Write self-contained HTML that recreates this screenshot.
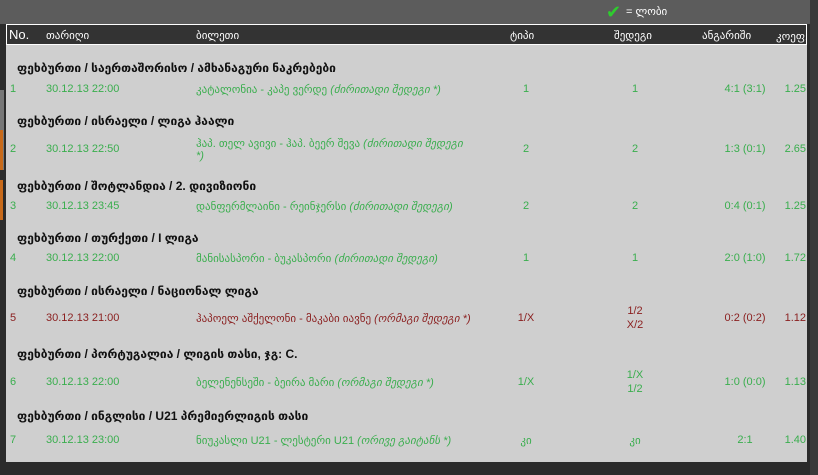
<!DOCTYPE html><html><head><meta charset="utf-8"><style>
body{margin:0;width:818px;height:475px;overflow:hidden;background:#2b2b2b;font-family:"Liberation Sans","DejaVu Sans",sans-serif;position:relative}
.top{position:absolute;left:0;top:0;width:810px;height:24px;background:#5c5c5c}
.hdr{position:absolute;left:6px;top:24px;width:799px;height:19px;background:#333;border:1px solid #fff;color:#fff;font-size:11px}
.body{position:absolute;left:6px;top:45px;width:801px;height:417px;background:#cfcfcf}
.t{position:absolute;white-space:nowrap}
.g{font-weight:bold;font-size:12px;color:#111;left:17px}
.r{font-size:11px;color:#3aae4e}
.d{color:#8a1e1e}
i{font-style:italic}
.c{text-align:center;width:60px}
.k{right:12px}
</style></head><body>
<div class="top"></div>
<div class="t" style="left:606px;top:2px;color:#2ecc2e;font-size:18px;font-weight:bold">✔</div>
<div class="t" style="left:626px;top:5px;color:#fff;font-size:11px">= ლობი</div>
<div style="position:absolute;left:0;top:90px;width:4px;height:80px;background:#777"></div>
<div style="position:absolute;left:0;top:130px;width:3px;height:40px;background:#c86a1a"></div>
<div style="position:absolute;left:0;top:180px;width:3px;height:40px;background:#c86a1a"></div>
<div style="position:absolute;left:810px;top:0;width:8px;height:475px;background:#3a3a3a"></div>
<div class="hdr">
<span class="t" style="left:2px;top:2px;font-size:13px">No.</span>
<span class="t" style="left:39px;top:4px">თარიღი</span>
<span class="t" style="left:189px;top:4px">ბილეთი</span>
<span class="t" style="left:503px;top:4px">ტიპი</span>
<span class="t" style="left:607px;top:4px">შედეგი</span>
<span class="t" style="left:695px;top:4px">ანგარიში</span>
<span class="t" style="left:769px;top:5px">კოეფ.</span>
</div>
<div class="body"></div>
<div class="t g" style="top:61px">ფეხბურთი / საერთაშორისო / ამხანაგური ნაკრებები</div>
<div class="t g" style="top:114px">ფეხბურთი / ისრაელი / ლიგა ჰაალი</div>
<div class="t g" style="top:179px">ფეხბურთი / შოტლანდია / 2. დივიზიონი</div>
<div class="t g" style="top:231px">ფეხბურთი / თურქეთი / I ლიგა</div>
<div class="t g" style="top:284px">ფეხბურთი / ისრაელი / ნაციონალ ლიგა</div>
<div class="t g" style="top:347px">ფეხბურთი / პორტუგალია / ლიგის თასი, ჯგ: C.</div>
<div class="t g" style="top:409px">ფეხბურთი / ინგლისი / U21 პრემიერლიგის თასი</div>

<div class="t r" style="left:10px;top:83px">1</div><div class="t r" style="left:46px;top:83px">30.12.13 22:00</div><div class="t r" style="left:196px;top:83px">კატალონია - კაპე ვერდე <i>(ძირითადი შედეგი *)</i></div><div class="t r c" style="left:496px;top:83px">1</div><div class="t r c" style="left:605px;top:83px">1</div><div class="t r c" style="left:715px;top:83px">4:1 (3:1)</div><div class="t r k" style="top:83px">1.25</div>

<div class="t r" style="left:10px;top:143px">2</div><div class="t r" style="left:46px;top:143px">30.12.13 22:50</div><div class="t r" style="left:196px;top:137px">ჰაპ. თელ ავივი - ჰაპ. ბეერ შევა <i>(ძირითადი შედეგი</i></div><div class="t r" style="left:196px;top:150px"><i>*)</i></div><div class="t r c" style="left:496px;top:143px">2</div><div class="t r c" style="left:605px;top:143px">2</div><div class="t r c" style="left:715px;top:143px">1:3 (0:1)</div><div class="t r k" style="top:143px">2.65</div>

<div class="t r" style="left:10px;top:200px">3</div><div class="t r" style="left:46px;top:200px">30.12.13 23:45</div><div class="t r" style="left:196px;top:200px">დანფერმლაინი - რეინჯერსი <i>(ძირითადი შედეგი)</i></div><div class="t r c" style="left:496px;top:200px">2</div><div class="t r c" style="left:605px;top:200px">2</div><div class="t r c" style="left:715px;top:200px">0:4 (0:1)</div><div class="t r k" style="top:200px">1.25</div>

<div class="t r" style="left:10px;top:252px">4</div><div class="t r" style="left:46px;top:252px">30.12.13 22:00</div><div class="t r" style="left:196px;top:252px">მანისასპორი - ბუკასპორი <i>(ძირითადი შედეგი)</i></div><div class="t r c" style="left:496px;top:252px">1</div><div class="t r c" style="left:605px;top:252px">1</div><div class="t r c" style="left:715px;top:252px">2:0 (1:0)</div><div class="t r k" style="top:252px">1.72</div>

<div class="t r d" style="left:10px;top:312px">5</div><div class="t r d" style="left:46px;top:312px">30.12.13 21:00</div><div class="t r d" style="left:196px;top:312px">ჰაპოელ აშქელონი - მაკაბი იავნე <i>(ორმაგი შედეგი *)</i></div><div class="t r d c" style="left:496px;top:312px">1/X</div><div class="t r d c" style="left:605px;top:305px">1/2</div><div class="t r d c" style="left:605px;top:319px">X/2</div><div class="t r d c" style="left:715px;top:312px">0:2 (0:2)</div><div class="t r d k" style="top:312px">1.12</div>

<div class="t r" style="left:10px;top:376px">6</div><div class="t r" style="left:46px;top:376px">30.12.13 22:00</div><div class="t r" style="left:196px;top:376px">ბელენენსეში - ბეირა მარი <i>(ორმაგი შედეგი *)</i></div><div class="t r c" style="left:496px;top:376px">1/X</div><div class="t r c" style="left:605px;top:369px">1/X</div><div class="t r c" style="left:605px;top:383px">1/2</div><div class="t r c" style="left:715px;top:376px">1:0 (0:0)</div><div class="t r k" style="top:376px">1.13</div>

<div class="t r" style="left:10px;top:434px">7</div><div class="t r" style="left:46px;top:434px">30.12.13 23:00</div><div class="t r" style="left:196px;top:434px">ნიუკასლი U21 - ლესტერი U21 <i>(ორივე გაიტანს *)</i></div><div class="t r c" style="left:496px;top:434px">კი</div><div class="t r c" style="left:605px;top:434px">კი</div><div class="t r c" style="left:715px;top:434px">2:1</div><div class="t r k" style="top:434px">1.40</div>
</body></html>
